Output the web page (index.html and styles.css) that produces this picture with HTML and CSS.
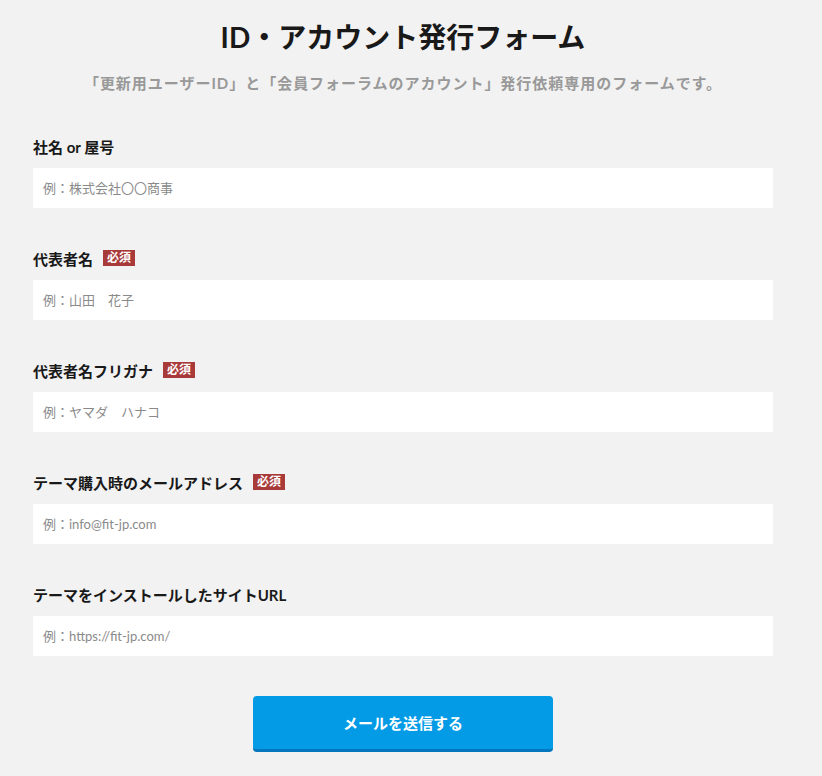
FILE: index.html
```html
<!DOCTYPE html>
<html lang="ja">

<head>
  <meta charset="UTF-8">
  <meta name="viewport" content="width=device-width, initial-scale=1.0">
  <title>ID・アカウント発行フォーム</title>
  <link rel="stylesheet" href="styles.css">
</head>

<body>
  <div class="page">
    <h1 class="title">ID・アカウント発行フォーム</h1>
    <p class="lead">「更新用ユーザーID」と「会員フォーラムのアカウント」発行依頼専用のフォームです。</p>

    <form class="form" onsubmit="return false">
      <div class="field">
        <label class="label">社名 or 屋号</label>
        <input class="input" type="text" placeholder="例：株式会社〇〇商事">
      </div>
      <div class="field">
        <label class="label">代表者名<span class="req">必須</span></label>
        <input class="input" type="text" placeholder="例：山田　花子">
      </div>
      <div class="field">
        <label class="label">代表者名フリガナ<span class="req">必須</span></label>
        <input class="input" type="text" placeholder="例：ヤマダ　ハナコ">
      </div>
      <div class="field">
        <label class="label">テーマ購入時のメールアドレス<span class="req">必須</span></label>
        <input class="input" type="email" placeholder="例：info@fit-jp.com">
      </div>
      <div class="field">
        <label class="label">テーマをインストールしたサイトURL</label>
        <input class="input" type="text" placeholder="例：https://fit-jp.com/">
      </div>
      <div class="submit">
        <button class="btn" type="submit">メールを送信する</button>
      </div>
    </form>
  </div>
</body>

</html>
```

FILE: styles.css
```css
html,
body {
  margin: 0;
  padding: 0;
  background-color: #f2f2f2;
}

body {
  font-family: Lato, "Noto Sans CJK JP", sans-serif;
  color: #191919;
}

.page {
  width: 740px;
  padding: 0 49px 0 33px;
}

.title {
  margin: 0;
  padding-top: 17px;
  font-size: 28px;
  line-height: 40px;
  font-weight: bold;
  text-align: center;
}

.lead {
  margin: 15px 0 0;
  font-size: 15px;
  line-height: 22px;
  letter-spacing: 0.065em;
  font-weight: bold;
  color: #999;
  text-align: center;
}

.form {
  margin-top: 40px;
}

.field {
  margin-bottom: 38px;
}

.label {
  display: flex;
  align-items: center;
  height: 24px;
  margin-bottom: 10px;
  font-size: 15px;
  font-weight: bold;
}

.req {
  margin-left: 10px;
  padding: 0 4px;
  background-color: #a83a3a;
  color: #fff;
  font-size: 12px;
  line-height: 16px;
}

.input {
  display: block;
  box-sizing: border-box;
  width: 100%;
  height: 40px;
  padding: 0 10px;
  border: none;
  background-color: #fff;
  font-family: inherit;
  font-size: 13px;
  color: #333;
}

.input::placeholder {
  color: #8a8a8a;
}

.submit {
  display: flex;
  justify-content: center;
  padding-top: 2px;
}

.btn {
  width: 300px;
  height: 56px;
  border: none;
  border-bottom: 3px solid #0277bd;
  border-radius: 4px;
  background-color: #039be5;
  color: #fff;
  font-family: inherit;
  font-size: 15px;
  font-weight: bold;
  cursor: pointer;
}
```
